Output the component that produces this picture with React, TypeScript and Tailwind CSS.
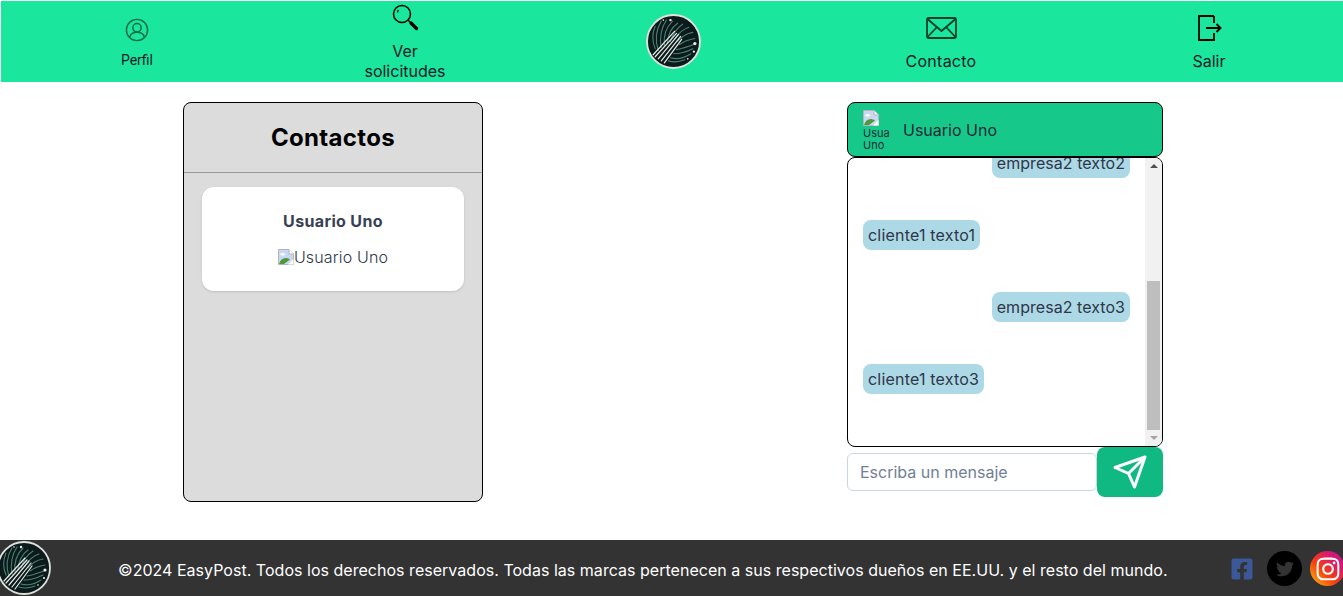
import { FaFacebookSquare, FaInstagram, FaTwitter } from "react-icons/fa";

const Logo = ({ className }: { className: string }) => (
  <svg className={className} viewBox="0 0 54 54">
    <circle cx="27" cy="27" r="26" fill="#0c1a1b" stroke="#dfe3de" strokeWidth="1.8" />
    <g fill="none" strokeLinecap="round">
      <g stroke="#4a7f72" strokeWidth="1.1">
        <path d="M9 34C6 27 6 19 9 12" />
        <path d="M12 36C9 26 10 15 15 7" />
        <path d="M15 33C13 24 15 13 20 6" />
        <path d="M18 31C17 22 20 13 26 7" />
        <path d="M21 29C21 21 25 13 31 9" />
        <path d="M24 27C26 20 30 14 36 10" />
        <path d="M28 25C31 20 36 15 42 13" />
        <path d="M31 27C35 22 40 19 46 18" />
        <path d="M33 30C37 27 42 25 48 24" />
        <path d="M30 35C36 34 41 32 47 30" />
        <path d="M27 39C33 39 40 37 46 34" />
        <path d="M24 43C31 45 38 43 44 39" />
        <path d="M22 46C28 48 33 47 38 45" />
      </g>
      <g stroke="#e3e9e4" strokeWidth="1.2">
        <path d="M7 40L28 17" />
        <path d="M9 42L30 19" />
        <path d="M12 44L32 20" />
        <path d="M15 46L34 22" />
        <path d="M18 48L35 25" />
      </g>
    </g>
    <g fill="#e8eeea">
      <circle cx="17" cy="6" r="0.8" />
      <circle cx="24" cy="6" r="1.2" />
      <circle cx="48" cy="29" r="1.6" />
      <circle cx="47" cy="37" r="1.100" />
      <circle cx="41" cy="44" r="0.8" />
    </g>
  </svg>
);

const BrokenImage = () => (
  <svg className="size-4 shrink-0" viewBox="0 0 16 16">
    <path d="M.5.5H11L15.500 5V15.500H.5Z" fill="#c9d8f2" stroke="#b4b4bc" />
    <path d="M11 .5V5H15.500" fill="#fff" stroke="#b4b4bc" />
    <path d="M2 5.500C3 3.500 6 3.500 7.500 5.500C5.500 7 3.500 7 2 5.500Z" fill="#fff" />
    <path d="M1 15C2.500 9 8 7.500 12 10.500L6 15Z" fill="#4e9a3a" />
    <path d="M10 15.500L15.500 10V15.500Z" fill="#fff" />
  </svg>
);

const Bubble = ({ text, mine }: { text: string; mine?: boolean }) => (
  <div
    className={`h-[30px] w-fit rounded-lg bg-[#add8e6] px-[5px] leading-[30px] ${mine ? "ml-auto tracking-[0.05px]" : "tracking-[0.2px]"}`}
  >
    {text}
  </div>
);

export default function App() {
  return (
    <div className="flex h-[596px] flex-col overflow-hidden bg-white font-['Inter',sans-serif] text-[#2d3748]">
      <header className="mt-px ml-px grid h-[81px] grid-cols-5 bg-[#1ae79d] pl-[2px] text-[#111827]">
        <a className="flex flex-col items-center pt-[17px] text-center">
          <svg className="size-6" viewBox="0 0 26 26" fill="none" stroke="#0f6b4c" strokeWidth="1.6">
            <circle cx="13" cy="13" r="11.500" />
            <circle cx="13" cy="10.500" r="4.500" />
            <path d="M5 20.500C6.500 16.800 9.500 15.500 13 15.500S19.500 16.800 21 20.500" />
          </svg>
          <span className="mt-2 font-['Roboto',sans-serif] text-sm leading-5">Perfil</span>
        </a>
        <a className="flex flex-col items-center pt-[2px] text-center">
          <svg className="size-7" viewBox="0 0 28 28" fill="none" stroke="#000">
            <circle cx="11" cy="11" r="8.500" strokeWidth="1.500" />
            <path d="M6.500 9.500C6.700 8.500 7 7.500 7.500 7" strokeWidth="1.200" />
            <path d="M17 17L19.500 19.500" strokeWidth="1.500" />
            <path d="M20 20L25.500 25.500" strokeWidth="3.200" strokeLinecap="round" />
          </svg>
          <span className="mt-[10px] w-[100px] leading-5">Ver solicitudes</span>
        </a>
        <div className="flex items-center justify-center">
          <Logo className="size-[55px]" />
        </div>
        <a className="flex flex-col items-center pt-4 text-center">
          <svg className="h-[22px] w-[31px]" viewBox="0 0 31 22" fill="none" stroke="#043f2c" strokeWidth="1.800">
            <rect x="1" y="1" width="29" height="20" rx="1.500" />
            <path d="M1.500 2L15.500 14L29.500 2M1.500 20L11 10M29.500 20L20 10" />
          </svg>
          <span className="mt-3 leading-5 tracking-[0.25px]">Contacto</span>
        </a>
        <a className="flex flex-col items-center pt-[14px] text-center">
          <svg className="h-[26px] w-[25px]" viewBox="0 0 25 26" fill="none" stroke="#000" strokeWidth="1.800">
            <path d="M17 1H2V25H17V18M17 1V8" />
            <path d="M9 13H23M19.500 9L23.500 13L19.500 17" />
          </svg>
          <span className="mt-[10px] leading-5">Salir</span>
        </a>
      </header>

      <main className="flex h-[458px] justify-between pt-5 pr-[180px] pl-[183px]">
        <section className="h-[400px] w-[300px] rounded-lg border border-black bg-[#dcdcdc]">
          <div className="flex h-[70px] items-center justify-center border-b border-[#9b9b9b]">
            <h2 className="text-2xl font-bold tracking-[0.33px] text-black">Contactos</h2>
          </div>
          <div className="mx-[18px] mt-[14px] flex h-[104px] flex-col items-center rounded-xl bg-white pt-6 shadow">
            <h3 className="leading-5 font-bold tracking-[0.35px] text-[#374151]">Usuario Uno</h3>
            <div className="mt-4 flex items-center leading-5 font-light tracking-[0.15px]">
              <BrokenImage />
              <span>Usuario Uno</span>
            </div>
          </div>
        </section>

        <section className="w-[316px]">
          <div className="flex h-[55px] items-center rounded-lg border border-black bg-[#16c98a] pl-[15px] text-[#1f2937]">
            <div className="w-6 pt-px text-[11px] leading-3">
              <BrokenImage />
              <div className="mt-px">Usua Uno</div>
            </div>
            <span className="ml-4">Usuario Uno</span>
          </div>
          <div className="flex h-[290px] overflow-hidden rounded-lg border border-black">
            <div className="flex-1 overflow-hidden pr-[15px] pl-[15px]">
              <div className="-mt-[10px] flex flex-col gap-[42px]">
                <Bubble mine text="empresa2 texto2" />
                <Bubble text="cliente1 texto1" />
                <Bubble mine text="empresa2 texto3" />
                <Bubble text="cliente1 texto3" />
              </div>
            </div>
            <div className="flex w-[17px] flex-col bg-[#f1f1f1]">
              <div className="flex h-4 items-center justify-center text-[#505050]">
                <div className="h-0 w-0 border-x-4 border-b-4 border-x-transparent border-b-current" />
              </div>
              <div className="mx-[2px] mt-[107px] h-[149px] bg-[#bebebe]" />
              <div className="flex flex-1 items-center justify-center text-[#a3a3a3]">
                <div className="h-0 w-0 border-x-4 border-t-4 border-x-transparent border-t-current" />
              </div>
            </div>
          </div>
          <form className="flex items-start">
            <input
              className="mt-[6px] h-[38px] w-[250px] rounded-md border border-[#cbd5e0] px-3 text-base placeholder:text-[#718096]"
              placeholder="Escriba un mensaje"
            />
            <button type="button" className="flex h-[50px] w-[66px] items-center justify-center rounded-lg bg-[#10b981]">
              <svg className="size-9" viewBox="0 0 24 24" fill="none" stroke="#fff" strokeWidth="2" strokeLinejoin="round">
                <path d="M22 2L15 22L11 13L2 9Z" />
                <path d="M22 2L11 13" />
              </svg>
            </button>
          </form>
        </section>
      </main>

      <footer className="relative flex h-[56px] items-center bg-[#333] text-white">
        <Logo className="-ml-[3px] size-[54px] shrink-0" />
        <p className="mt-1 ml-[67px] whitespace-nowrap tracking-[0.025px]">
          ©2024 EasyPost. Todos los derechos reservados. Todas las marcas pertenecen a sus respectivos dueños en EE.UU. y el resto del mundo.
        </p>
        <div className="absolute top-[11px] left-[1230px] flex w-[115px] items-center">
          <FaFacebookSquare className="size-6 text-[#3b5998]" />
          <div className="ml-[13px] flex size-[35px] items-center justify-center rounded-full bg-black">
            <FaTwitter className="size-[18px] text-[#333]" />
          </div>
          <div className="ml-2 flex size-[35px] shrink-0 items-center justify-center rounded-full bg-[linear-gradient(45deg,#fdc30f,#f5400c_40%,#dc1a6c_70%,#b5109c)]">
            <FaInstagram className="size-[26px] text-white" />
          </div>
        </div>
      </footer>
    </div>
  );
}
